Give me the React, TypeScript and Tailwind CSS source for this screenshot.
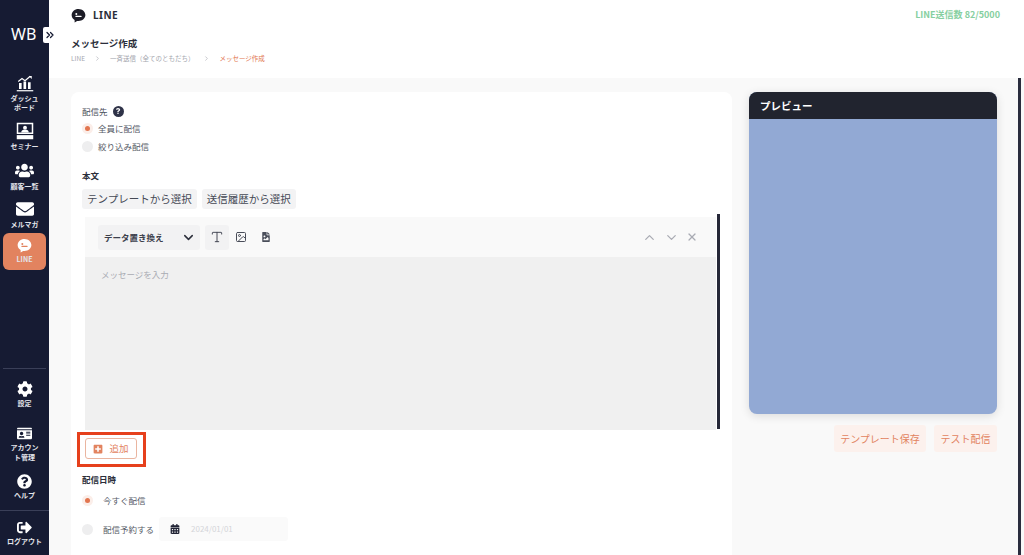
import React from "react";
import { ChevronDown, ChevronUp, ChevronsRight, X, Type, Image as ImageIcon, ChevronRight } from "lucide-react";
import { FaCog, FaIdCard, FaQuestionCircle, FaEnvelope, FaUsers, FaCalendarAlt, FaPlusSquare, FaFileImage, FaSignOutAlt, FaQuestion, FaChalkboardTeacher } from "react-icons/fa";

const font = { fontFamily: '"Noto Sans CJK JP","Noto Sans",sans-serif' };

function Bubble({ size, fg, bg }: { size: number; fg: string; bg: string }) {
  return (
    <svg width={size} height={size} viewBox="0 0 24 24">
      <path d="M12 1.5C5.8 1.5 1 5.9 1 11.3c0 3.4 1.9 6.3 4.8 8v3.7l4-2.4c.7.1 1.4.2 2.2.2 6.2 0 11-4.4 11-9.5S18.2 1.5 12 1.5z" fill={bg} />
      <circle cx="8.5" cy="9.5" r="1.6" fill={fg} />
      <rect x="7" y="12.5" width="10" height="1.8" rx="0.9" fill={fg} />
    </svg>
  );
}

function Dash() {
  return (
    <svg width="18" height="18" viewBox="0 0 24 24" fill="white">
      <path d="M3 10l5-4 4 3 7-6" stroke="white" strokeWidth="1.6" fill="none" />
      <path d="M17 2.5h4v4z" />
      <rect x="4" y="12" width="3.5" height="8" />
      <rect x="10" y="10" width="3.5" height="10" />
      <rect x="16" y="11" width="3.5" height="9" />
      <rect x="1" y="21.5" width="22" height="1.6" />
    </svg>
  );
}

function Seminar() {
  return (
    <svg width="18" height="18" viewBox="0 0 24 24" fill="white">
      <path fillRule="evenodd" d="M1 1h22v15H1zM3 3v11h18V3z" />
      <circle cx="12" cy="7.5" r="2.6" />
      <path d="M7 14c0-3 2.2-4 5-4s5 1 5 4z" />
      <rect x="1" y="17.5" width="22" height="5.5" />
    </svg>
  );
}

function NavItem({ icon, label, active, h }: { icon: React.ReactNode; label: React.ReactNode; active?: boolean; h: string }) {
  return (
    <div className={`flex flex-col items-center justify-center gap-[2px] mx-[3px] rounded-md ${h} ${active ? "bg-[#e2835f]" : ""}`}>
      {icon}
      <div className="text-center text-[7px] leading-[9.5px] font-bold text-[#e3e4ea]">{label}</div>
    </div>
  );
}

function Radio({ on, label, gap = "gap-[8px]" }: { on?: boolean; label: string; gap?: string }) {
  return (
    <div className={`flex items-center ${gap}`}>
      <span className={`flex h-[11px] w-[11px] items-center justify-center rounded-full ${on ? "bg-[#fbeee9]" : "bg-[#eeeeef]"}`}>
        {on && <span className="h-[5px] w-[5px] rounded-full bg-[#e2754f]" />}
      </span>
      <span className="text-[8.5px] leading-none text-[#555a66]">{label}</span>
    </div>
  );
}

export default function App() {
  return (
    <div style={font} className="flex h-[555px] w-[1024px] overflow-hidden bg-[#f9f9f9]">
      <aside className="relative flex h-full w-[49px] shrink-0 flex-col bg-[#161b33]">
        <div className="flex h-[69px] items-end pb-[25px] pl-[11px]">
          <span style={{ fontFamily: '"Noto Sans",sans-serif' }} className="text-[16px] leading-[20px] text-white">WB</span>
        </div>
        <div className="absolute left-[43px] top-[27px] flex h-[16px] w-[13px] items-center justify-center rounded-l-[2px] bg-white">
          <ChevronsRight size={12} strokeWidth={2.5} className="text-[#161b33]" />
        </div>
        <NavItem h="h-[48px]" icon={<Dash />} label={<>ダッシュ<br />ボード</>} />
        <NavItem h="h-[39px]" icon={<Seminar />} label="セミナー" />
        <NavItem h="h-[40px]" icon={<FaUsers size={19} color="white" />} label="顧客一覧" />
        <NavItem h="h-[37px]" icon={<FaEnvelope size={18} color="white" />} label="メルマガ" />
        <NavItem active h="h-[37px]" icon={<Bubble size={15} bg="white" fg="#e2835f" />} label="LINE" />
        <div className="flex-1" />
        <div className="mx-[3px] h-px bg-[#3a3f58]" />
        <NavItem h="h-[52px]" icon={<FaCog size={16} color="white" />} label="設定" />
        <NavItem h="h-[46px]" icon={<FaIdCard size={15} color="white" />} label={<>アカウン<br />ト管理</>} />
        <NavItem h="h-[40px]" icon={<FaQuestionCircle size={15} color="white" />} label="ヘルプ" />
        <div className="mt-[3px] h-px bg-[#3a3f58]" />
        <NavItem h="h-[44px]" icon={<FaSignOutAlt size={15} color="white" />} label="ログアウト" />
      </aside>

      <div className="flex min-w-0 flex-1 flex-col">
        <header className="flex h-[78px] shrink-0 flex-col bg-white pl-[22px] pr-[24px]">
          <div className="flex h-[30px] items-center justify-between">
            <div className="flex items-center gap-[7px]">
              <Bubble size={15} bg="#1c1c26" fg="white" />
              <span style={{ fontFamily: '"Noto Sans",sans-serif' }} className="text-[10px] font-bold tracking-[0.5px] text-[#2b2e3a]">LINE</span>
            </div>
            <span className="text-[9px] font-bold text-[#86cfa0]">LINE送信数 82/5000</span>
          </div>
          <div className="mt-[6px] text-[9.5px] font-bold leading-[14px] text-[#2b2e3a]">メッセージ作成</div>
          <div className="mt-[3px] flex items-center text-[6.5px] leading-[10px] text-[#a4a6ae]">
            <span>LINE</span>
            <ChevronRight size={7} className="mx-[9px]" />
            <span>一斉送信（全てのともだち）</span>
            <ChevronRight size={7} className="mx-[9px]" />
            <span className="text-[#e2754f]">メッセージ作成</span>
          </div>
        </header>

        <main className="flex min-h-0 flex-1 border-r-[3px] border-r-[#2a2d3e] pr-0 pl-[22px] pt-[14px] mr-[3px]">
          <section className="h-[480px] w-[661px] shrink-0 rounded-t-lg bg-white pl-[11px] pt-[12px]">
            <div className="flex items-center gap-[5px]">
              <span className="text-[8.5px] leading-[14px] text-[#4a4e5a]">配信先</span>
              <span className="flex h-[11px] w-[11px] items-center justify-center rounded-full bg-[#2f3348]">
                <FaQuestion size={6} color="white" />
              </span>
            </div>
            <div className="mt-[5px] flex flex-col gap-[7px] pl-0">
              <Radio on label="全員に配信" gap="gap-[5px]" />
              <Radio label="絞り込み配信" gap="gap-[5px]" />
            </div>
            <div className="mt-[17px] text-[8.5px] font-bold leading-[12px] text-[#2b2e3a]">本文</div>
            <div className="mt-[8px] flex gap-[5px]">
              <button className="h-[20px] rounded-[3px] bg-[#f3f3f4] px-[5px] text-[10.5px] leading-none text-[#454955]">テンプレートから選択</button>
              <button className="h-[20px] rounded-[3px] bg-[#f3f3f4] px-[5px] text-[10.5px] leading-none text-[#454955]">送信履歴から選択</button>
            </div>
            <div className="relative mt-[8px] ml-[3px] w-[631px]">
              <div className="flex h-[40px] w-[631px] items-center bg-[#f9f9f9] pl-[13px] pr-[18px]">
                <div className="flex h-[25px] w-[102px] items-center justify-between rounded-[3px] bg-[#f2f2f3] pl-[6px] pr-[4px]">
                  <span className="text-[8.5px] font-bold text-[#3c404c]">データ置き換え</span>
                  <ChevronDown size={15} strokeWidth={2.4} className="text-[#2b2e3a]" />
                </div>
                <div className="ml-[5px] flex h-[25px] w-[24px] items-center justify-center rounded-[3px] bg-[#f2f2f3]">
                  <Type size={14} strokeWidth={1.6} className="text-[#3c404c]" />
                </div>
                <ImageIcon size={12} className="ml-[6px] text-[#4a4e5a]" />
                <FaFileImage size={10} className="ml-[14px] text-[#4a4e5a]" />
                <div className="flex-1" />
                <ChevronUp size={15} className="text-[#a9abb3]" />
                <ChevronDown size={15} className="ml-[7px] text-[#a9abb3]" />
                <X size={12} strokeWidth={2.4} className="ml-[7px] text-[#a9abb3]" />
              </div>
              <div className="h-[173px] w-[631px] bg-[#f0f0f0] pl-[16px] pt-[11px]">
                <span className="block text-[8.5px] leading-[12px] text-[#a9abb3]">メッセージを入力</span>
              </div>
              <div className="absolute -top-[3px] right-[-4px] h-[215px] w-[3px] bg-[#262838]" />
            </div>
            <div className="relative ml-[3px] mt-[8px] h-[21px]">
              <button className="flex h-[21px] w-[52px] items-center justify-center gap-[6px] rounded-[3px] border border-[#eab5a0] bg-white text-[9.5px] text-[#e2835f]">
                <FaPlusSquare size={10} className="text-[#e2835f]" />
                追加
              </button>
              <div className="absolute left-[-8px] top-[-6px] h-[35px] w-[69px] border-[3px] border-[#e6401c]" />
            </div>
            <div className="mt-[14px] text-[8.5px] font-bold leading-[12px] text-[#2b2e3a]">配信日時</div>
            <div className="mt-[10px]">
              <Radio on label="今すぐ配信" gap="gap-[10px]" />
            </div>
            <div className="mt-[11px] flex items-center">
              <Radio label="配信予約する" gap="gap-[10px]" />
              <div className="ml-[5px] flex h-[24px] w-[129px] items-center rounded-[3px] bg-[#fafafa] pl-[11px]">
                <FaCalendarAlt size={10} className="text-[#1f2233]" />
                <span className="ml-[11px] text-[8px] text-[#d4d5d9]">2024/01/01</span>
              </div>
            </div>
          </section>

          <section className="ml-[17px] w-[248px] shrink-0">
            <div className="flex h-[322px] flex-col overflow-hidden rounded-lg bg-[#92a9d4] shadow-[0_2px_10px_rgba(0,0,0,0.12)]">
              <div className="flex h-[27px] items-center bg-[#21242f] pl-[11px] text-[10.5px] font-bold text-white">プレビュー</div>
            </div>
            <div className="mt-[11px] flex justify-end gap-[8px]">
              <button className="h-[27px] w-[92px] rounded-[3px] bg-[#fcf1ed] text-[10px] text-[#e2835f]">テンプレート保存</button>
              <button className="h-[27px] w-[63px] rounded-[3px] bg-[#fcf1ed] text-[10px] text-[#e2835f]">テスト配信</button>
            </div>
          </section>
        </main>
      </div>
    </div>
  );
}
